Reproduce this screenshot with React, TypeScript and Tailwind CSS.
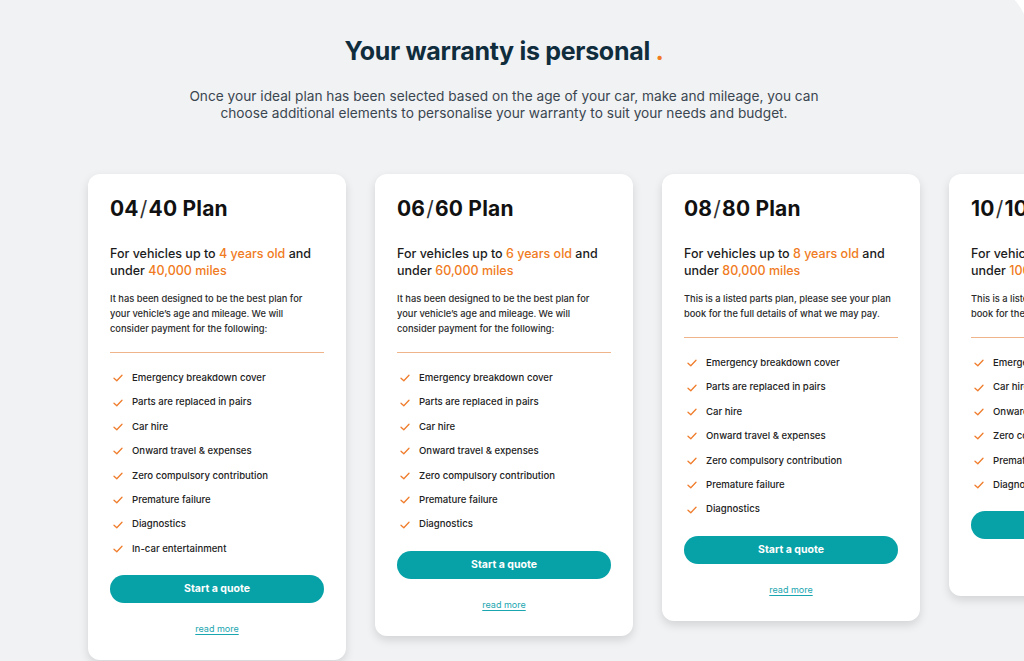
import React from "react";

type Plan = {
  title: string;
  years: string;
  miles: string;
  desc: string[];
  items: string[];
};

const plans: Plan[] = [
  {
    title: "04/40 Plan",
    years: "4 years old",
    miles: "40,000 miles",
    desc: [
      "It has been designed to be the best plan for",
      "your vehicle’s age and mileage. We will",
      "consider payment for the following:",
    ],
    items: [
      "Emergency breakdown cover",
      "Parts are replaced in pairs",
      "Car hire",
      "Onward travel & expenses",
      "Zero compulsory contribution",
      "Premature failure",
      "Diagnostics",
      "In-car entertainment",
    ],
  },
  {
    title: "06/60 Plan",
    years: "6 years old",
    miles: "60,000 miles",
    desc: [
      "It has been designed to be the best plan for",
      "your vehicle’s age and mileage. We will",
      "consider payment for the following:",
    ],
    items: [
      "Emergency breakdown cover",
      "Parts are replaced in pairs",
      "Car hire",
      "Onward travel & expenses",
      "Zero compulsory contribution",
      "Premature failure",
      "Diagnostics",
    ],
  },
  {
    title: "08/80 Plan",
    years: "8 years old",
    miles: "80,000 miles",
    desc: [
      "This is a listed parts plan, please see your plan",
      "book for the full details of what we may pay.",
    ],
    items: [
      "Emergency breakdown cover",
      "Parts are replaced in pairs",
      "Car hire",
      "Onward travel & expenses",
      "Zero compulsory contribution",
      "Premature failure",
      "Diagnostics",
    ],
  },
  {
    title: "10/100 Plan",
    years: "10 years old",
    miles: "100,000 miles",
    desc: [
      "This is a listed parts plan, please see your plan",
      "book for the full details of what we may pay.",
    ],
    items: [
      "Emergency breakdown cover",
      "Car hire",
      "Onward travel & expenses",
      "Zero compulsory contribution",
      "Premature failure",
      "Diagnostics",
    ],
  },
];

function Check() {
  return (
    <svg width="10" height="8" viewBox="0 0 10 8" className="shrink-0">
      <polyline
        points="1,4.2 3.8,6.8 9,1.2"
        fill="none"
        stroke="#ef7d2d"
        strokeWidth="1.3"
        strokeLinecap="round"
        strokeLinejoin="round"
      />
    </svg>
  );
}

function Card({ plan }: { plan: Plan }) {
  const [a, b] = plan.title.split("/");
  return (
    <div className="w-[258px] shrink-0 bg-white rounded-[12px] shadow-[0_4px_10px_rgba(0,0,0,0.13)] px-[22px] pt-[21px] pb-[22px]">
      <h3 className="text-[21px] leading-[28px] font-bold text-[#111] tracking-[0.2px]">
        {a}
        <span className="font-normal text-[#333] mx-[1px]">/</span>
        {b}
      </h3>
      <p className="mt-[22px] text-[12.5px] leading-[17px] font-medium text-[#1c1c1c]">
        For vehicles up to <span className="text-[#f07b22]">{plan.years}</span> and
        <br />
        under <span className="text-[#f07b22]">{plan.miles}</span>
      </p>
      <p className="mt-[12px] text-[9.3px] leading-[15px] font-medium text-[#2b2b2b]">
        {plan.desc.map((l, i) => (
          <React.Fragment key={i}>
            {l}
            {i < plan.desc.length - 1 && <br />}
          </React.Fragment>
        ))}
      </p>
      <div className="mt-[16px] h-px bg-[#efb48a]" />
      <ul className="mt-[13px] flex flex-col">
        {plan.items.map((it) => (
          <li key={it} className="h-[24.4px] flex items-center gap-[9px] pl-[3px]">
            <Check />
            <span className="text-[9.6px] font-medium text-[#222]">{it}</span>
          </li>
        ))}
      </ul>
      <button className="mt-[14px] w-full h-[28px] rounded-full bg-[#07a2a7] text-white text-[10.5px] font-bold">
        Start a quote
      </button>
      <div className="mt-[11px] text-center">
        <a className="text-[9px] text-[#1aa6b0] underline underline-offset-2">read more</a>
      </div>
    </div>
  );
}

export default function App() {
  return (
    <div
      className="w-[1024px] h-[661px] overflow-hidden bg-white"
      style={{ fontFamily: "Inter, 'Noto Sans', sans-serif" }}
    >
      <div className="w-[1030px] h-[700px] -mt-[20px] bg-[#f1f2f4] rounded-tr-[60px] pt-[55px]">
        <div className="w-[1008px] text-center">
          <h1 className="text-[25px] leading-[32px] font-bold text-[#0f2d3c] tracking-[-0.3px]">
            Your warranty is personal <span className="text-[#f07b22]">.</span>
          </h1>
          <p className="mt-[21px] text-[13.7px] leading-[17px] text-[#3a4650]">
            Once your ideal plan has been selected based on the age of your car, make and mileage, you can
            <br />
            choose additional elements to personalise your warranty to suit your needs and budget.
          </p>
        </div>
        <div className="mt-[52px] ml-[88px] flex items-start gap-[29px]">
          {plans.map((p) => (
            <Card key={p.title} plan={p} />
          ))}
        </div>
      </div>
    </div>
  );
}
